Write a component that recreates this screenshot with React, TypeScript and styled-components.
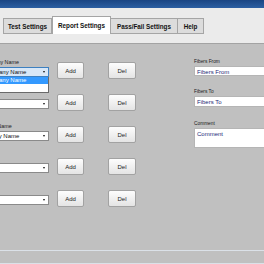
import React from "react";
import styled, { createGlobalStyle } from "styled-components";

const GlobalStyle = createGlobalStyle`
  html, body {
    margin: 0;
    padding: 0;
    background: #c0c0c0;
    overflow: hidden;
  }
  body {
    font-family: "Liberation Sans", Arial, sans-serif;
  }
`;

const Window = styled.div`
  width: 264px;
  height: 264px;
  display: flex;
  flex-direction: column;
  background: #c0c0c0;
  overflow: hidden;
`;

const TitleBar = styled.div`
  flex: none;
  height: 8px;
  background: linear-gradient(#1a4583, #2c5fa2);
`;

const TabStrip = styled.div`
  flex: none;
  height: 36px;
  box-sizing: border-box;
  padding: 8px 0 0 3px;
  display: flex;
  align-items: flex-start;
  background: #ebebeb;
  border-bottom: 1px solid #a3a3a3;
`;

const Tab = styled.div<{ $active?: boolean; $w: number }>`
  width: ${(p) => p.$w}px;
  height: ${(p) => (p.$active ? 18 : 16)}px;
  margin-top: ${(p) => (p.$active ? 0 : 2)}px;
  box-sizing: border-box;
  display: flex;
  align-items: center;
  justify-content: center;
  font-size: 6.3px;
  font-weight: bold;
  color: #111;
  white-space: nowrap;
  background: ${(p) => (p.$active ? "#ffffff" : "#dcdcdc")};
  border: 1px solid #a5a5a5;
  border-bottom: ${(p) => (p.$active ? "none" : "1px solid #a5a5a5")};
  border-left: ${(p) => (p.$active ? "1px solid #a5a5a5" : "none")};
  &:first-child {
    border-left: 1px solid #a5a5a5;
  }
`;

const Main = styled.div`
  flex: 1;
  display: flex;
  padding-top: 3px;
`;

const LeftPanel = styled.div`
  margin-left: -20px;
  display: flex;
  flex-direction: column;
`;

const Row = styled.div`
  height: 32px;
  display: flex;
  align-items: flex-end;
`;

const Field = styled.div`
  position: relative;
  width: 69px;
  margin-bottom: 2px;
  display: flex;
  flex-direction: column;
`;

const Label = styled.div`
  height: 6px;
  line-height: 6px;
  margin-bottom: 2px;
  font-size: 5.4px;
  color: #1a1a1a;
  white-space: nowrap;
`;

const Combo = styled.div<{ $focused?: boolean }>`
  height: 10px;
  box-sizing: border-box;
  display: flex;
  align-items: center;
  justify-content: space-between;
  padding: 0 3px 0 2px;
  font-size: 6px;
  color: #111;
  white-space: nowrap;
  background: ${(p) => (p.$focused ? "#d8e7f7" : "#ffffff")};
  border: 1px solid ${(p) => (p.$focused ? "#3d80c0" : "#8a8a8a")};
`;

const Arrow = styled.span`
  width: 0;
  height: 0;
  border-left: 1.5px solid transparent;
  border-right: 1.5px solid transparent;
  border-top: 2px solid #111;
`;

const DropList = styled.div`
  position: absolute;
  left: 0;
  right: 0;
  top: 100%;
  height: 16px;
  box-sizing: border-box;
  background: #ffffff;
  border: 1px solid #6a6a6a;
  border-top: none;
`;

const DropItem = styled.div`
  height: 7px;
  line-height: 7px;
  padding-left: 2px;
  font-size: 6px;
  color: #ffffff;
  background: #3399ff;
  white-space: nowrap;
`;

const Btn = styled.div<{ $w: number; $gap: number }>`
  width: ${(p) => p.$w}px;
  height: 17px;
  margin-left: ${(p) => p.$gap}px;
  box-sizing: border-box;
  display: flex;
  align-items: center;
  justify-content: center;
  font-size: 6px;
  color: #222;
  background: linear-gradient(#fdfdfd, #e4e4e4);
  border: 1px solid #a2a2a2;
  border-radius: 2px;
`;

const RightPanel = styled.div`
  margin-left: 58px;
  padding-top: 12px;
  flex: 1;
  display: flex;
  flex-direction: column;
`;

const RightLabel = styled.div`
  height: 6px;
  line-height: 6px;
  margin-bottom: 1px;
  font-size: 4.8px;
  color: #1a1a1a;
  white-space: nowrap;
`;

const TextBox = styled.div<{ $h: number; $gap: number }>`
  height: ${(p) => p.$h}px;
  margin-bottom: ${(p) => p.$gap}px;
  box-sizing: border-box;
  padding: 1px 2px;
  font-size: 6px;
  line-height: 8px;
  color: #1e2a78;
  white-space: nowrap;
  background: #ffffff;
  border: 1px solid #b5b5b5;
  border-right: none;
`;

const Footer = styled.div`
  flex: none;
  height: 14px;
  box-sizing: border-box;
  border-top: 1px solid #dbe1e8;
  border-bottom: 1px solid #dbe1e8;
`;

const rows = [
  { label: "Company Name", value: "Company Name", focused: true },
  { label: "", value: "" },
  { label: "Owner Name", value: "Facility Name" },
  { label: "", value: "" },
  { label: "", value: "" },
];

export default function App() {
  return (
    <Window>
      <GlobalStyle />
      <TitleBar />
      <TabStrip>
        <Tab $w={49}>Test Settings</Tab>
        <Tab $w={59} $active>
          Report Settings
        </Tab>
        <Tab $w={67}>Pass/Fail Settings</Tab>
        <Tab $w={26}>Help</Tab>
      </TabStrip>
      <Main>
        <LeftPanel>
          {rows.map((r, i) => (
            <Row key={i}>
              <Field>
                {r.label && <Label>{r.label}</Label>}
                <Combo $focused={r.focused}>
                  <span>{r.value}</span>
                  <Arrow />
                </Combo>
                {r.focused && (
                  <DropList>
                    <DropItem>Company Name</DropItem>
                  </DropList>
                )}
              </Field>
              <Btn $w={27} $gap={8}>
                Add
              </Btn>
              <Btn $w={28} $gap={24}>
                Del
              </Btn>
            </Row>
          ))}
        </LeftPanel>
        <RightPanel>
          <RightLabel>Fibers From</RightLabel>
          <TextBox $h={10} $gap={13}>
            Fibers From
          </TextBox>
          <RightLabel>Fibers To</RightLabel>
          <TextBox $h={11} $gap={14}>
            Fibers To
          </TextBox>
          <RightLabel>Comment</RightLabel>
          <TextBox $h={20} $gap={0}>
            Comment
          </TextBox>
        </RightPanel>
      </Main>
      <Footer />
    </Window>
  );
}
